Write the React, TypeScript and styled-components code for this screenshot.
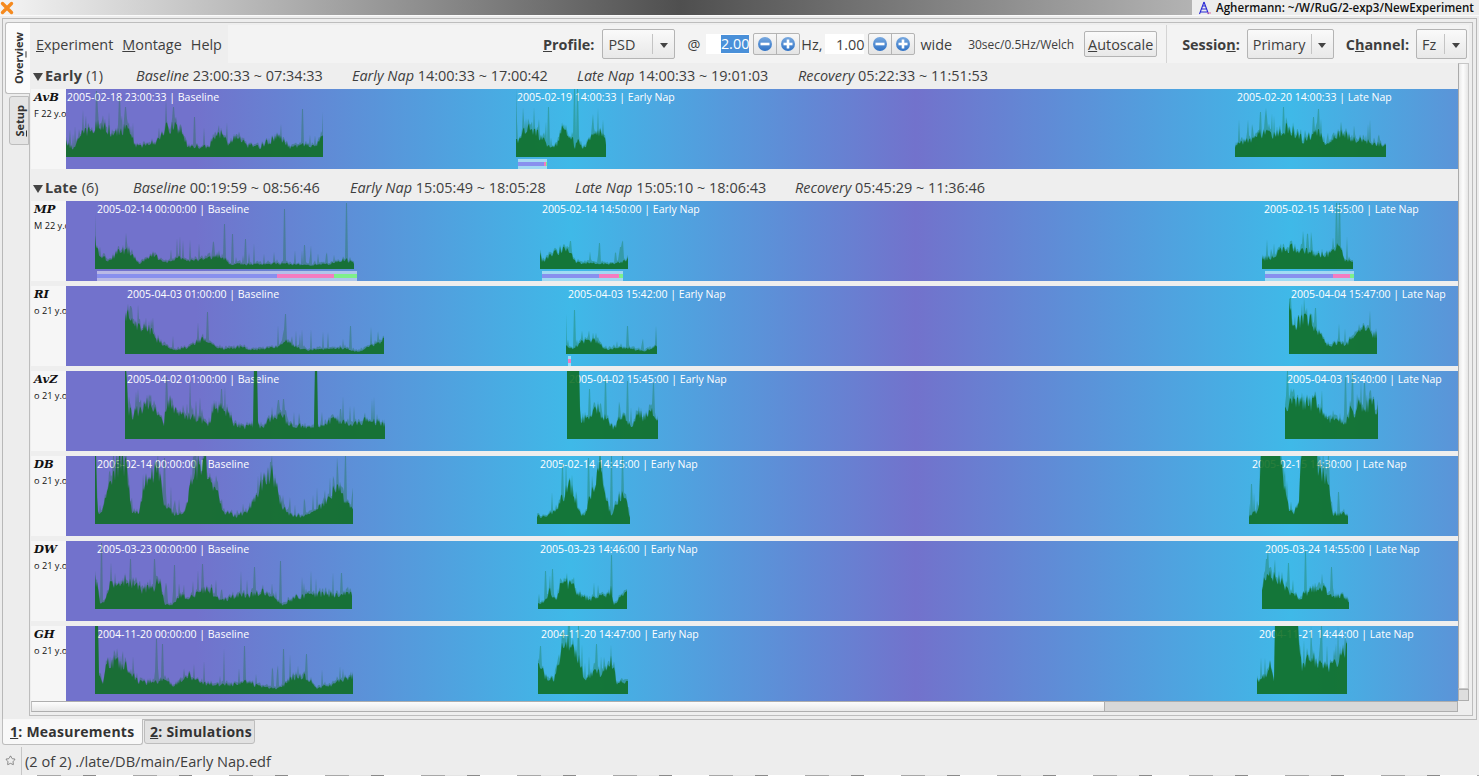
import styled, { createGlobalStyle } from "styled-components";
import { Star } from "lucide-react";

type Point = [number, number];

type Episode = {
  left: number; // x of the wave on the canvas
  width: number;
  captionLeft: number;
  caption: string;
  env: Point[];
  spikes?: Point[];
  bar?: { left: number; width: number; parts: number[] };
};

type Subject = { name: string; meta: string; height?: number; episodes: Episode[] };

const WAVE_HEIGHT = 68;

const GlobalStyle = createGlobalStyle`
  html, body { margin: 0; padding: 0; overflow: hidden; }
  body { font-family: "Open Sans", "Noto Sans", sans-serif; color: #3e3e3e; background: #ededed; }
`;

const wave = (seed: number, width: number, env: Point[], spikes: Point[] = []) => {
  let s = seed * 7919 + 13;
  const rnd = () => {
    s = (s * 1664525 + 1013904223) % 4294967296;
    return ((s >>> 8) % 1000) / 1000;
  };
  const at = (f: number) => {
    for (let i = 1; i < env.length; i++) {
      if (f <= env[i][0]) {
        const [f0, h0] = env[i - 1];
        const [f1, h1] = env[i];
        return h0 + ((h1 - h0) * (f - f0)) / Math.max(f1 - f0, 0.001);
      }
    }
    return env[env.length - 1][1];
  };
  let body = `M0 ${WAVE_HEIGHT}`;
  let halo = `M0 ${WAVE_HEIGHT}`;
  for (let x = 0; x <= width; x++) {
    const f = x / width;
    const base = at(f);
    const h = base >= WAVE_HEIGHT ? WAVE_HEIGHT + 2 : base * (0.74 + 0.46 * rnd());
    let top = h + 1 + rnd() * rnd() * Math.max(base * 0.35, 3);
    if (rnd() < 0.09) top += 5 + rnd() * 16;
    for (const [sf, sh] of spikes) {
      if (Math.abs(sf * width - x) < 1) top = Math.max(top, sh);
    }
    body += ` L${x} ${(WAVE_HEIGHT - h).toFixed(1)}`;
    halo += ` L${x} ${(WAVE_HEIGHT - top).toFixed(1)}`;
  }
  return { body: `${body} L${width} ${WAVE_HEIGHT} Z`, halo: `${halo} L${width} ${WAVE_HEIGHT} Z` };
};

const ep = (
  absLeft: number,
  absRight: number,
  capLeft: number,
  caption: string,
  env: Point[],
  spikes?: Point[],
  bar?: { left: number; width: number; parts: number[] }
): Episode => ({
  left: absLeft - 66,
  width: absRight - absLeft,
  captionLeft: capLeft - 66,
  caption,
  env,
  spikes,
  bar: bar && { ...bar, left: bar.left - 66 },
});

const earlyGroup: Subject[] = [
  {
    name: "AvB",
    meta: "F 22 y.o.",
    episodes: [
      ep(66, 323, 67, "2005-02-18 23:00:33 | Baseline",
        [[0, 15], [0.03, 8], [0.05, 22], [0.1, 28], [0.13, 35], [0.18, 25], [0.22, 28], [0.24, 30], [0.27, 12], [0.3, 12], [0.35, 15], [0.39, 30], [0.45, 30], [0.47, 12], [0.55, 10], [0.6, 25], [0.63, 15], [0.67, 22], [0.7, 12], [0.75, 10], [0.8, 18], [0.83, 22], [0.87, 10], [0.92, 13], [0.96, 10], [1, 20]],
        [[0.12, 66], [0.21, 60], [0.23, 50], [0.42, 50], [0.5, 40], [0.92, 48], [1, 45]]),
      ep(516, 606, 517, "2005-02-19 14:00:33 | Early Nap",
        [[0, 15], [0.05, 22], [0.13, 30], [0.2, 25], [0.3, 20], [0.37, 10], [0.45, 12], [0.5, 28], [0.64, 20], [0.65, 0], [0.66, 18], [0.75, 10], [0.85, 20], [0.95, 25], [1, 15]],
        [[0, 68], [0.36, 50], [0.65, 68], [0.68, 68], [0.2, 50]],
        { left: 518, width: 29, parts: [0.89, 0.06, 0.05] }),
      ep(1235, 1386, 1237, "2005-02-20 14:00:33 | Late Nap",
        [[0, 12], [0.1, 18], [0.18, 25], [0.25, 22], [0.35, 30], [0.45, 18], [0.55, 25], [0.6, 15], [0.7, 25], [0.8, 18], [0.9, 15], [1, 12]],
        [[0.17, 45], [0.32, 50], [0.55, 48], [0.52, 40]]),
    ],
  },
];

const lateGroup: Subject[] = [
  {
    name: "MP",
    meta: "M 22 y.o.",
    episodes: [
      ep(95, 354, 97, "2005-02-14 00:00:00 | Baseline",
        [[0, 30], [0.01, 18], [0.05, 8], [0.08, 15], [0.1, 20], [0.13, 18], [0.17, 6], [0.2, 10], [0.23, 15], [0.27, 6], [0.32, 12], [0.36, 8], [0.42, 10], [0.49, 14], [0.52, 5], [0.6, 5], [0.72, 6], [0.8, 4], [0.9, 5], [0.97, 10], [1, 6]],
        [[0, 55], [0.5, 45], [0.53, 35], [0.58, 30], [0.73, 60], [0.81, 24], [0.97, 66]],
        { left: 97, width: 260, parts: [0.692, 0.22, 0.088] }),
      ep(540, 628, 542, "2005-02-14 14:50:00 | Early Nap",
        [[0, 14], [0.03, 8], [0.12, 15], [0.25, 20], [0.36, 18], [0.38, 8], [0.5, 6], [0.7, 6], [0.85, 5], [1, 10]],
        [[0.35, 28], [0.68, 26], [0.92, 22]],
        { left: 542, width: 81, parts: [0.7, 0.25, 0.05] }),
      ep(1262, 1353, 1264, "2005-02-15 14:55:00 | Late Nap",
        [[0, 10], [0.1, 12], [0.2, 20], [0.35, 22], [0.5, 18], [0.62, 15], [0.75, 15], [0.85, 25], [0.9, 10], [1, 8]],
        [[0.82, 66], [0.85, 66], [0.5, 35]],
        { left: 1265, width: 89, parts: [0.76, 0.19, 0.05] }),
    ],
  },
  {
    name: "RI",
    meta: "o 21 y.o.",
    episodes: [
      ep(125, 384, 127, "2005-04-03 01:00:00 | Baseline",
        [[0, 42], [0.02, 35], [0.05, 30], [0.1, 25], [0.12, 15], [0.15, 9], [0.2, 4], [0.25, 8], [0.3, 15], [0.33, 10], [0.38, 5], [0.45, 7], [0.5, 4], [0.6, 8], [0.62, 15], [0.65, 8], [0.7, 4], [0.85, 6], [0.9, 2], [0.95, 8], [1, 14]],
        [[0.02, 48], [0.32, 42], [0.62, 40], [0.87, 28]]),
      ep(566, 657, 568, "2005-04-03 15:42:00 | Early Nap",
        [[0, 8], [0.08, 5], [0.15, 12], [0.28, 15], [0.35, 12], [0.42, 5], [0.6, 6], [0.7, 6], [0.85, 3], [1, 8]],
        [[0, 40], [0.09, 44], [0.68, 28]],
        { left: 568, width: 3, parts: [0, 1, 0] }),
      ep(1289, 1377, 1291, "2005-04-04 15:47:00 | Late Nap",
        [[0, 50], [0.06, 30], [0.15, 35], [0.25, 35], [0.35, 20], [0.45, 8], [0.55, 12], [0.65, 10], [0.75, 18], [0.85, 25], [1, 20]],
        [[0.02, 56], [0.3, 46]]),
    ],
  },
  {
    name: "AvZ",
    meta: "o 21 y.o.",
    episodes: [
      ep(125, 385, 127, "2005-04-02 01:00:00 | Baseline",
        [[0, 70], [0.006, 70], [0.01, 30], [0.03, 25], [0.08, 35], [0.1, 38], [0.12, 25], [0.15, 15], [0.16, 40], [0.18, 35], [0.22, 25], [0.28, 22], [0.32, 16], [0.35, 35], [0.39, 30], [0.42, 15], [0.47, 12], [0.494, 14], [0.495, 70], [0.51, 70], [0.511, 14], [0.53, 13], [0.56, 22], [0.6, 25], [0.63, 15], [0.729, 12], [0.73, 70], [0.74, 70], [0.741, 14], [0.78, 15], [0.8, 22], [0.85, 15], [0.9, 18], [0.95, 20], [1, 14]],
        [[0.05, 50], [0.16, 62], [0.25, 60], [0.37, 50], [0.61, 40], [0.83, 30], [0.95, 40]]),
      ep(567, 658, 569, "2005-04-02 15:45:00 | Early Nap",
        [[0, 70], [0.14, 70], [0.145, 15], [0.22, 25], [0.35, 30], [0.45, 18], [0.52, 10], [0.58, 25], [0.65, 20], [0.7, 12], [0.78, 25], [0.87, 22], [0.95, 30], [1, 20]],
        [[0.25, 50], [0.42, 60], [0.66, 58], [0.95, 56]]),
      ep(1285, 1378, 1287, "2005-04-03 15:40:00 | Late Nap",
        [[0, 35], [0.1, 38], [0.2, 35], [0.33, 38], [0.4, 25], [0.5, 20], [0.6, 18], [0.65, 15], [0.7, 30], [0.75, 22], [0.8, 35], [0.95, 35], [1, 30]],
        [[0.03, 68], [0.65, 62], [0.73, 66], [0.85, 56]]),
    ],
  },
  {
    name: "DB",
    meta: "o 21 y.o.",
    episodes: [
      ep(95, 353, 97, "2005-02-14 00:00:00 | Baseline",
        [[0, 70], [0.004, 70], [0.01, 10], [0.03, 15], [0.06, 40], [0.09, 60], [0.12, 60], [0.14, 15], [0.17, 10], [0.2, 50], [0.24, 58], [0.27, 20], [0.31, 10], [0.35, 12], [0.38, 50], [0.42, 68], [0.46, 40], [0.5, 12], [0.55, 8], [0.6, 15], [0.65, 45], [0.69, 50], [0.72, 20], [0.75, 10], [0.8, 8], [0.85, 12], [0.9, 25], [0.94, 40], [0.97, 25], [1, 15]],
        [[0.07, 68], [0.1, 68], [0.27, 66], [0.68, 62], [0.97, 68]]),
      ep(537, 630, 540, "2005-02-14 14:45:00 | Early Nap",
        [[0, 8], [0.1, 8], [0.2, 15], [0.28, 28], [0.35, 40], [0.4, 30], [0.47, 10], [0.5, 8], [0.55, 20], [0.62, 45], [0.68, 60], [0.72, 30], [0.8, 10], [0.85, 18], [0.9, 30], [0.95, 25], [1, 8]],
        [[0.27, 60], [0.55, 66], [0.8, 68], [0.92, 68]]),
      ep(1249, 1348, 1252, "2005-02-15 14:30:00 | Late Nap",
        [[0, 8], [0.1, 15], [0.12, 70], [0.2, 70], [0.25, 70], [0.32, 70], [0.36, 40], [0.4, 15], [0.45, 10], [0.5, 20], [0.53, 70], [0.65, 70], [0.72, 60], [0.8, 40], [0.85, 10], [1, 10]],
        [[0.03, 40], [0.8, 68], [0.9, 32]]),
    ],
  },
  {
    name: "DW",
    meta: "o 21 y.o.",
    episodes: [
      ep(95, 352, 97, "2005-03-23 00:00:00 | Baseline",
        [[0, 30], [0.01, 25], [0.02, 5], [0.04, 8], [0.06, 25], [0.09, 30], [0.14, 28], [0.18, 20], [0.23, 22], [0.25, 30], [0.27, 5], [0.3, 4], [0.33, 14], [0.38, 12], [0.42, 20], [0.45, 20], [0.49, 8], [0.53, 12], [0.6, 15], [0.65, 18], [0.68, 15], [0.73, 4], [0.78, 12], [0.85, 15], [0.92, 15], [1, 17]],
        [[0.025, 66], [0.14, 50], [0.23, 50], [0.31, 44], [0.42, 45], [0.62, 42], [0.72, 48], [0.96, 36]]),
      ep(538, 627, 540, "2005-03-23 14:46:00 | Early Nap",
        [[0, 5], [0.08, 8], [0.13, 20], [0.2, 8], [0.25, 25], [0.3, 28], [0.4, 22], [0.5, 12], [0.6, 10], [0.8, 15], [0.82, 20], [0.85, 5], [0.95, 14], [1, 16]],
        [[0.08, 38], [0.16, 40], [0.83, 54]]),
      ep(1262, 1349, 1265, "2005-03-24 14:55:00 | Late Nap",
        [[0, 25], [0.05, 35], [0.15, 32], [0.25, 25], [0.35, 15], [0.45, 12], [0.55, 20], [0.7, 22], [0.85, 12], [0.93, 15], [1, 8]],
        [[0.05, 50], [0.3, 46], [0.5, 58], [0.8, 42]]),
    ],
  },
  {
    name: "GH",
    meta: "o 21 y.o.",
    episodes: [
      ep(95, 353, 97, "2004-11-20 00:00:00 | Baseline",
        [[0, 70], [0.012, 70], [0.015, 20], [0.03, 8], [0.05, 35], [0.08, 32], [0.13, 28], [0.17, 12], [0.22, 12], [0.27, 15], [0.3, 8], [0.36, 20], [0.4, 15], [0.43, 10], [0.5, 9], [0.53, 9], [0.58, 12], [0.65, 7], [0.72, 6], [0.76, 18], [0.82, 18], [0.86, 6], [0.9, 8], [0.96, 15], [1, 18]],
        [[0.24, 55], [0.26, 50], [0.5, 45], [0.58, 48], [0.73, 45], [0.82, 40]]),
      ep(538, 628, 541, "2004-11-20 14:47:00 | Early Nap",
        [[0, 30], [0.05, 25], [0.1, 15], [0.18, 15], [0.25, 35], [0.3, 60], [0.38, 50], [0.48, 30], [0.52, 15], [0.62, 25], [0.72, 20], [0.82, 35], [0.87, 12], [1, 12]],
        [[0.03, 48], [0.35, 68], [0.45, 68], [0.65, 50]]),
      ep(1257, 1347, 1259, "2004-11-21 14:44:00 | Late Nap",
        [[0, 15], [0.1, 18], [0.15, 30], [0.19, 10], [0.2, 70], [0.45, 70], [0.5, 25], [0.6, 40], [0.7, 30], [0.8, 25], [0.9, 35], [1, 45]],
        [[0.6, 68], [0.72, 68], [0.9, 68]]),
    ],
  },
];

lateGroup[lateGroup.length - 1].height = 75;

const Page = styled.div`
  width: 100vw;
  height: 100vh;
  display: flex;
  flex-direction: column;
  overflow: hidden;
  position: relative;
`;

const TitleBar = styled.div`
  height: 15px;
  flex: none;
  display: flex;
  justify-content: space-between;
  background: linear-gradient(90deg, #f4f4f4 0%, #4f4f4f 46%, #b4b4b4 81%);
  border-bottom: 1px solid #fafafa;
`;

const TitleRight = styled.div`
  width: 287px;
  display: flex;
  align-items: center;
  gap: 4px;
  padding-left: 6px;
  box-sizing: border-box;
  background: #ededed;
  font-size: 11.6px;
  font-weight: 600;
  color: #111;
  white-space: nowrap;
`;

const Notebook = styled.div`
  height: 702px;
  flex: none;
  margin: 2px 2px 0 2px;
  box-sizing: border-box;
  border: 1px solid #b8b8b8;
  padding: 3px 3px 3px 2px;
  display: flex;
`;

const SideTabs = styled.div`
  width: 24px;
  flex: none;
  display: flex;
  flex-direction: column;
  align-items: flex-end;
  gap: 2px;
`;

const SideTab = styled.div<{ $active?: boolean; $h: number }>`
  width: ${(p) => (p.$active ? 25 : 20)}px;
  height: ${(p) => p.$h}px;
  box-sizing: border-box;
  margin-right: ${(p) => (p.$active ? -1 : 0)}px;
  position: relative;
  z-index: ${(p) => (p.$active ? 2 : 0)};
  display: flex;
  align-items: center;
  justify-content: center;
  border: 1px solid #bdbdbd;
  border-right: ${(p) => (p.$active ? "none" : "1px solid #bdbdbd")};
  border-radius: 3px 0 0 3px;
  background: ${(p) => (p.$active ? "#fbfbfb" : "#e4e4e4")};
  font-size: 11px;
  font-weight: 700;
  color: #333;
  span {
    writing-mode: vertical-rl;
    transform: rotate(180deg);
  }
`;

const Panel = styled.div`
  flex: 1;
  min-width: 0;
  box-sizing: border-box;
  border: 1px solid #bdbdbd;
  padding: 2px 3px 2px 1px;
  display: flex;
  flex-direction: column;
  background: #eeeeee;
`;

const Toolbar = styled.div`
  height: 38px;
  flex: none;
  display: flex;
  align-items: center;
  background: #f3f3f3;
  font-size: 14.4px;
  white-space: nowrap;
`;

const MenuBar = styled.div`
  width: 197px;
  height: 38px;
  flex: none;
  display: flex;
  align-items: center;
  gap: 9px;
  padding-left: 5px;
  box-sizing: border-box;
  background: #eeeeee;
  margin-right: 315px;
`;

const Tool = styled.span<{ $ml?: number; $bold?: boolean; $size?: number }>`
  margin-left: ${(p) => p.$ml ?? 0}px;
  font-weight: ${(p) => (p.$bold ? 700 : 400)};
  font-size: ${(p) => p.$size ?? 14.4}px;
`;

const Combo = styled.div<{ $w: number; $ml: number }>`
  width: ${(p) => p.$w}px;
  height: 30px;
  margin-left: ${(p) => p.$ml}px;
  flex: none;
  box-sizing: border-box;
  display: flex;
  align-items: center;
  padding-left: 5px;
  border: 1px solid #b4b4b4;
  border-radius: 2px;
  background: linear-gradient(#fafafa, #e8e8e8);
  span {
    flex: 1;
  }
`;

const ComboArrow = styled.div`
  width: 21px;
  height: 20px;
  flex: none;
  display: flex;
  align-items: center;
  justify-content: center;
  border-left: 1px solid #c4c4c4;
  &::after {
    content: "";
    border-left: 4px solid transparent;
    border-right: 4px solid transparent;
    border-top: 5px solid #444;
    margin-top: 2px;
  }
`;

const SpinInput = styled.div<{ $w: number; $ml: number }>`
  width: ${(p) => p.$w}px;
  height: 20px;
  margin-left: ${(p) => p.$ml}px;
  flex: none;
  display: flex;
  align-items: center;
  justify-content: flex-end;
  background: #ffffff;
`;

const Selected = styled.span`
  background: #4a90d9;
  color: #ffffff;
  height: 18px;
  line-height: 18px;
`;

const SpinButtons = styled.div`
  display: flex;
  height: 22px;
  width: 47px;
  flex: none;
  box-sizing: border-box;
  margin-left: 4px;
  border: 1px solid #b4b4b4;
  border-radius: 2px;
  background: linear-gradient(#f8f8f8, #e4e4e4);
`;

const SpinButton = styled.div`
  flex: 1;
  display: flex;
  align-items: center;
  justify-content: center;
  & + & {
    border-left: 1px solid #b4b4b4;
  }
`;

const ButtonBox = styled.div`
  width: 73px;
  height: 26px;
  margin-left: 10px;
  flex: none;
  box-sizing: border-box;
  display: flex;
  align-items: center;
  justify-content: center;
  border: 1px solid #b4b4b4;
  border-radius: 2px;
  background: linear-gradient(#fafafa, #e8e8e8);
`;

const ToolSep = styled.div`
  width: 1px;
  height: 38px;
  margin-left: 9px;
  flex: none;
  background: #d4d4d4;
`;

const ScrollArea = styled.div`
  flex: 1;
  min-height: 0;
  display: grid;
  grid-template-columns: 1427px 12px;
  grid-template-rows: 638px 11px;
`;

const Content = styled.div`
  overflow: hidden;
`;

const GroupHeader = styled.div<{ $h: number; $columns: string }>`
  height: ${(p) => p.$h}px;
  box-sizing: border-box;
  padding-left: 2px;
  display: grid;
  grid-template-columns: ${(p) => p.$columns};
  align-items: end;
  font-size: 14.45px;
  line-height: 26px;
  white-space: nowrap;
`;

const GroupName = styled.div`
  display: flex;
  align-items: center;
  gap: 2px;
  b {
    font-size: 14.5px;
    letter-spacing: 0.2px;
  }
  span {
    margin-left: 2px;
  }
`;

const Expander = styled.div`
  border-left: 5px solid transparent;
  border-right: 5px solid transparent;
  border-top: 8px solid #444;
  margin-top: 2px;
`;

const Row = styled.div<{ $h: number; $last?: boolean }>`
  height: ${(p) => p.$h}px;
  display: flex;
  margin-bottom: ${(p) => (p.$last ? 0 : 5)}px;
`;

const RowLabel = styled.div`
  width: 35px;
  flex: none;
  box-sizing: border-box;
  padding: 1px 0 0 3px;
  background: #f6f6f6;
  overflow: hidden;
  white-space: nowrap;
  color: #111;
`;

const RowName = styled.div`
  font-family: "DejaVu Serif", "Liberation Serif", serif;
  font-style: italic;
  font-weight: 700;
  font-size: 11.5px;
  line-height: 14px;
`;

const RowMeta = styled.div`
  font-size: 9.2px;
  line-height: 12px;
  margin-top: 4px;
`;

const Canvas = styled.div`
  flex: 1;
  position: relative;
  overflow: hidden;
  background: linear-gradient(
    90deg,
    #7272cc 130px,
    #3fb9e8 505px,
    #7272cc 850px,
    #3fb9e8 1225px,
    #5b94d8 1392px
  );
`;

const Caption = styled.div<{ $left: number }>`
  position: absolute;
  top: 1px;
  left: ${(p) => p.$left}px;
  font-size: 10.55px;
  line-height: 15px;
  color: #ffffff;
  white-space: pre;
`;

const Wave = styled.svg<{ $left: number }>`
  position: absolute;
  top: 0;
  left: ${(p) => p.$left}px;
  display: block;
`;

const Hypnogram = styled.div<{ $left: number; $w: number }>`
  position: absolute;
  top: 70px;
  height: 10px;
  left: ${(p) => p.$left}px;
  width: ${(p) => p.$w}px;
  display: flex;
  align-items: center;
  background: rgba(255, 255, 255, 0.5);
`;

const HypnoPart = styled.div<{ $color: string }>`
  height: 4px;
  background: ${(p) => p.$color};
`;

const VScroll = styled.div`
  display: flex;
  flex-direction: column;
  margin-right: 1px;
`;

const VThumb = styled.div`
  flex: 1;
  box-sizing: border-box;
  border: 1px solid #c6c6c6;
  border-left-color: #aaaaaa;
  background: linear-gradient(90deg, #e9e9e9, #fdfdfd 45%, #e6e6e6);
`;

const VStep = styled.div`
  height: 12px;
  box-sizing: border-box;
  border: 1px solid #aeaeae;
  background: #dedede;
`;

const HScroll = styled.div`
  display: flex;
  box-sizing: border-box;
  border-top: 1px solid #aeaeae;
  border-bottom: 1px solid #aeaeae;
  border-left: 1px solid #c0c0c0;
  border-right: 1px solid #aeaeae;
  background: #d8d8d8;
`;

const HThumb = styled.div`
  width: 1073px;
  box-sizing: border-box;
  border-right: 1px solid #aeaeae;
  background: linear-gradient(#fdfdfd, #e8e8e8);
`;

const BottomTabs = styled.div`
  height: 26px;
  flex: none;
  margin-top: -1px;
  padding-left: 2px;
  display: flex;
  align-items: flex-start;
  position: relative;
  font-size: 14px;
  font-weight: 700;
  letter-spacing: 0.25px;
  white-space: nowrap;
`;

const BottomTab = styled.div<{ $active?: boolean; $w: number }>`
  width: ${(p) => p.$w}px;
  height: ${(p) => (p.$active ? 26 : 24)}px;
  margin-left: ${(p) => (p.$active ? 0 : 1)}px;
  margin-top: ${(p) => (p.$active ? 0 : 1)}px;
  box-sizing: border-box;
  display: flex;
  align-items: center;
  padding-left: ${(p) => (p.$active ? 7 : 5)}px;
  padding-bottom: ${(p) => (p.$active ? 0 : 2)}px;
  border: 1px solid #bdbdbd;
  border-top: ${(p) => (p.$active ? "none" : "1px solid #bdbdbd")};
  border-radius: 0 0 3px 3px;
  background: ${(p) => (p.$active ? "#f8f8f8" : "#e2e2e2")};
  color: #333;
`;

const StatusBar = styled.div`
  flex: 1;
  display: flex;
  align-items: center;
  font-size: 14.6px;
  position: relative;
  &::after {
    content: "";
    position: absolute;
    left: 0;
    right: 0;
    bottom: 0;
    height: 1px;
    background: repeating-linear-gradient(90deg, #ffffff 0 37px, #a8a8a8 37px 61px, #e4e4e4 61px 83px, #8a8a8a 83px 96px);
  }
`;

const StatusIcon = styled.div`
  width: 22px;
  height: 28px;
  flex: none;
  box-sizing: border-box;
  border-right: 1px solid #c6c6c6;
  display: flex;
  align-items: center;
  justify-content: center;
  color: #555;
`;

const StatusText = styled.span`
  margin-left: 3px;
`;

const CloseMark = () => (
  <svg width="14" height="14" viewBox="0 0 14 14" style={{ marginTop: 1 }}>
    <path d="M2.5 2.5 L11.5 11.5 M11.5 2.5 L2.5 11.5" stroke="#f58a1f" strokeWidth="3.4" strokeLinecap="round" />
  </svg>
);

const AppLogo = () => (
  <svg width="14" height="14" viewBox="0 0 14 14">
    <path d="M6 1 L1.5 13 M6 1 L10.5 13 M3.5 8 L8.5 8 M2.5 11 L9.5 11 M4.5 5 L7.5 5" stroke="#2a2ad6" strokeWidth="1.1" fill="none" />
    <path d="M9 12 L13 12" stroke="#e070a0" strokeWidth="1" />
  </svg>
);

const RoundIcon = ({ plus }: { plus?: boolean }) => (
  <svg width="16" height="16" viewBox="0 0 16 16">
    <defs>
      <linearGradient id={plus ? "gp" : "gm"} x1="0" y1="0" x2="0" y2="1">
        <stop offset="0" stopColor="#79a9df" />
        <stop offset="1" stopColor="#2f72c6" />
      </linearGradient>
    </defs>
    <circle cx="8" cy="8" r="7" fill={`url(#${plus ? "gp" : "gm"})`} />
    <rect x="3.5" y="6.7" width="9" height="2.6" fill="#fff" />
    {plus && <rect x="6.7" y="3.5" width="2.6" height="9" fill="#fff" />}
  </svg>
);

const Spin = () => (
  <SpinButtons>
    <SpinButton>
      <RoundIcon />
    </SpinButton>
    <SpinButton>
      <RoundIcon plus />
    </SpinButton>
  </SpinButtons>
);

const partColors = ["#8890ee", "#f47cc0", "#7ef08a"];

const SubjectRow = ({ subject, seed, last }: { subject: Subject; seed: number; last?: boolean }) => (
  <Row $h={subject.height ?? 80} $last={last}>
    <RowLabel>
      <RowName>{subject.name}</RowName>
      <RowMeta>{subject.meta}</RowMeta>
    </RowLabel>
    <Canvas>
      {subject.episodes.map((e, i) => {
        const { body, halo } = wave(seed * 10 + i + 1, e.width, e.env, e.spikes);
        return (
          <div key={e.caption}>
            <Caption $left={e.captionLeft}>{e.caption}</Caption>
            <Wave $left={e.left} width={e.width} height={WAVE_HEIGHT} viewBox={`0 0 ${e.width} ${WAVE_HEIGHT}`}>
              <path d={halo} fill="rgb(14,109,34)" fillOpacity="0.3" />
              <path d={body} fill="rgb(14,109,34)" fillOpacity="0.83" />
            </Wave>
            {e.bar && (
              <Hypnogram $left={e.bar.left} $w={e.bar.width}>
                {e.bar.parts.map((p, k) =>
                  p > 0 ? <HypnoPart key={k} $color={partColors[k]} style={{ width: `${p * 100}%` }} /> : null
                )}
              </Hypnogram>
            )}
          </div>
        );
      })}
    </Canvas>
  </Row>
);

export default function App() {
  return (
    <Page>
      <GlobalStyle />
      <TitleBar>
        <CloseMark />
        <TitleRight>
          <AppLogo />
          Aghermann: ~/W/RuG/2-exp3/NewExperiment
        </TitleRight>
      </TitleBar>
      <Notebook>
        <SideTabs>
          <SideTab $active $h={72}>
            <span>
              Over<u>v</u>iew
            </span>
          </SideTab>
          <SideTab $h={49}>
            <span>
              <u>S</u>etup
            </span>
          </SideTab>
        </SideTabs>
        <Panel>
          <Toolbar>
            <MenuBar>
              <span>
                <u>E</u>xperiment
              </span>
              <span>
                <u>M</u>ontage
              </span>
              <span>Help</span>
            </MenuBar>
            <Tool $bold>
              <u>P</u>rofile:
            </Tool>
            <Combo $w={73} $ml={8}>
              <span>PSD</span>
              <ComboArrow />
            </Combo>
            <Tool $ml={12}>@</Tool>
            <SpinInput $w={43} $ml={6}>
              <Selected>2.00</Selected>
            </SpinInput>
            <Spin />
            <Tool $ml={1}>Hz,</Tool>
            <SpinInput $w={39} $ml={3}>
              <span>1.00</span>
            </SpinInput>
            <Spin />
            <Tool $ml={5}>wide</Tool>
            <Tool $ml={16} $size={12}>
              30sec/0.5Hz/Welch
            </Tool>
            <ButtonBox>
              <span>
                <u>A</u>utoscale
              </span>
            </ButtonBox>
            <ToolSep />
            <Tool $ml={15} $bold>
              Sessio<u>n</u>:
            </Tool>
            <Combo $w={87} $ml={7}>
              <span>Primary</span>
              <ComboArrow />
            </Combo>
            <Tool $ml={12} $bold>
              C<u>h</u>annel:
            </Tool>
            <Combo $w={51} $ml={7}>
              <span>Fz</span>
              <ComboArrow />
            </Combo>
          </Toolbar>
          <ScrollArea>
            <Content>
              <GroupHeader $h={26} $columns="103px 216px 225px 221px auto">
                <GroupName>
                  <Expander />
                  <b>Early</b>
                  <span>(1)</span>
                </GroupName>
                <div><i>Baseline</i> 23:00:33 ~ 07:34:33</div>
                <div><i>Early Nap</i> 14:00:33 ~ 17:00:42</div>
                <div><i>Late Nap</i> 14:00:33 ~ 19:01:03</div>
                <div><i>Recovery</i> 05:22:33 ~ 11:51:53</div>
              </GroupHeader>
              {earlyGroup.map((s, i) => (
                <SubjectRow key={s.name} subject={s} seed={i + 1} last />
              ))}
              <GroupHeader $h={32} $columns="100px 217px 225px 220px auto">
                <GroupName>
                  <Expander />
                  <b>Late</b>
                  <span>(6)</span>
                </GroupName>
                <div><i>Baseline</i> 00:19:59 ~ 08:56:46</div>
                <div><i>Early Nap</i> 15:05:49 ~ 18:05:28</div>
                <div><i>Late Nap</i> 15:05:10 ~ 18:06:43</div>
                <div><i>Recovery</i> 05:45:29 ~ 11:36:46</div>
              </GroupHeader>
              {lateGroup.map((s, i) => (
                <SubjectRow key={s.name} subject={s} seed={i + 2} last={i === lateGroup.length - 1} />
              ))}
            </Content>
            <VScroll>
              <VThumb />
              <VStep />
            </VScroll>
            <HScroll>
              <HThumb />
            </HScroll>
          </ScrollArea>
        </Panel>
      </Notebook>
      <BottomTabs>
        <BottomTab $active $w={141}>
          <span>
            <u>1</u>: Measurements
          </span>
        </BottomTab>
        <BottomTab $w={111}>
          <span>
            <u>2</u>: Simulations
          </span>
        </BottomTab>
      </BottomTabs>
      <StatusBar>
        <StatusIcon>
          <Star size={11} strokeWidth={1.4} />
        </StatusIcon>
        <StatusText>(2 of 2) ./late/DB/main/Early Nap.edf</StatusText>
      </StatusBar>
    </Page>
  );
}
